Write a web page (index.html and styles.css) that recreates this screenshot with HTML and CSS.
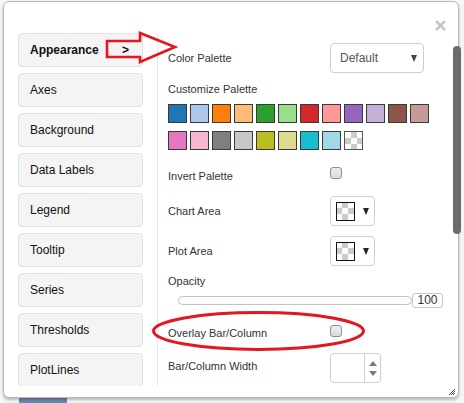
FILE: index.html
```html
<!DOCTYPE html>
<html>
<head>
<meta charset="utf-8">
<link rel="stylesheet" href="styles.css">
</head>
<body>
<div class="dialog">
  <div class="header">
    <svg class="close" width="11" height="11" viewBox="0 0 11 11"><path d="M1 1L10 10M10 1L1 10" stroke="#c6c6c6" stroke-width="2.6" fill="none"/></svg>
  </div>
  <div class="body">
    <nav class="tabs">
      <div class="tab active"><span>Appearance</span><span class="chev">&gt;</span></div>
      <div class="tab">Axes</div>
      <div class="tab">Background</div>
      <div class="tab">Data Labels</div>
      <div class="tab">Legend</div>
      <div class="tab">Tooltip</div>
      <div class="tab">Series</div>
      <div class="tab">Thresholds</div>
      <div class="tab">PlotLines</div>
    </nav>
    <div class="panel">
      <div class="row r-palette">
        <div class="lbl">Color Palette</div>
        <div class="select"><span>Default</span><span class="caret"></span></div>
      </div>
      <div class="sublbl">Customize Palette</div>
      <div class="swatches">
        <div class="sw" style="background:#1f77b4"></div>
        <div class="sw" style="background:#aec7e8"></div>
        <div class="sw" style="background:#ff7f0e"></div>
        <div class="sw" style="background:#ffbb78"></div>
        <div class="sw" style="background:#2ca02c"></div>
        <div class="sw" style="background:#98df8a"></div>
        <div class="sw" style="background:#d62728"></div>
        <div class="sw" style="background:#ff9896"></div>
        <div class="sw" style="background:#9467bd"></div>
        <div class="sw" style="background:#c5b0d5"></div>
        <div class="sw" style="background:#8c564b"></div>
        <div class="sw" style="background:#c49c94"></div>
        <div class="sw" style="background:#e377c2"></div>
        <div class="sw" style="background:#f7b6d2"></div>
        <div class="sw" style="background:#7f7f7f"></div>
        <div class="sw" style="background:#c7c7c7"></div>
        <div class="sw" style="background:#bcbd22"></div>
        <div class="sw" style="background:#dbdb8d"></div>
        <div class="sw" style="background:#17becf"></div>
        <div class="sw" style="background:#9edae5"></div>
        <div class="sw checker"></div>
      </div>
      <div class="row r-invert">
        <div class="lbl">Invert Palette</div>
        <div class="cb cb-up"></div>
      </div>
      <div class="row r-chart">
        <div class="lbl">Chart Area</div>
        <div class="colorbtn"><div class="chk"></div><span class="caret dark"></span></div>
      </div>
      <div class="row r-plot">
        <div class="lbl">Plot Area</div>
        <div class="colorbtn"><div class="chk"></div><span class="caret dark"></span></div>
      </div>
      <div class="sublbl op">Opacity</div>
      <div class="slider-row">
        <div class="track"></div>
        <div class="val">100</div>
      </div>
      <div class="row r-overlay">
        <div class="lbl">Overlay Bar/Column</div>
        <div class="cb"></div>
      </div>
      <div class="row r-width">
        <div class="lbl">Bar/Column Width</div>
        <div class="spin">
          <div class="spin-field"></div>
          <div class="spin-btns"><span class="up"></span><span class="down"></span></div>
        </div>
      </div>
    </div>
    <div class="scrollbar"><div class="thumb"></div></div>
  </div>
  <div class="footer">
    <svg width="8" height="8" viewBox="0 0 8 8"><path d="M7 1L1 7M7 3L3 7M7 5L5 7" stroke="#555" stroke-width="1" fill="none"/></svg>
  </div>
  <svg class="annot" width="464" height="403" viewBox="0 0 464 403">
    <polygon points="107,41 140,41 140,33 175,47 140,62 140,57 107,57" fill="none" stroke="#e4161f" stroke-width="2.6" stroke-linejoin="miter"/>
    <ellipse cx="258.5" cy="331" rx="105" ry="18.5" fill="none" stroke="#e4161f" stroke-width="3"/>
  </svg>
</div>
<div class="below"><div class="blue"></div></div>
</body>
</html>
```

FILE: styles.css
```css
html, body {
  margin: 0;
  padding: 0;
}
body {
  background: #f6f6f6;
  font-family: "Liberation Sans", Arial, sans-serif;
  color: #222;
  width: 464px;
  height: 403px;
  overflow: hidden;
}
.dialog {
  position: relative;
  box-sizing: border-box;
  width: 456px;
  height: 397px;
  margin: 1px 0 0 3px;
  background: #fff;
  border: 1px solid #b9b9b9;
  border-radius: 6px;
  box-shadow: 0 2px 3px rgba(0,0,0,0.25);
  display: flex;
  flex-direction: column;
}
.header {
  height: 31px;
  display: flex;
  justify-content: flex-end;
  align-items: flex-end;
  padding: 0 12px 2px 0;
  box-sizing: border-box;
}
.body {
  height: 353px;
  display: flex;
}
.tabs {
  width: 125px;
  margin: 0 14px 0 14px;
  height: 353px;
  overflow: hidden;
  display: flex;
  flex-direction: column;
  gap: 6px;
}
.tab {
  flex: 0 0 auto;
  box-sizing: border-box;
  height: 34px;
  background: #f4f4f4;
  border: 1px solid #e2e2e2;
  border-radius: 4px;
  padding: 0 13px 0 11px;
  font-size: 12px;
  line-height: 32px;
  color: #111;
  display: flex;
  justify-content: space-between;
}
.tab.active {
  font-weight: bold;
}
.chev {
  font-weight: bold;
  font-size: 12px;
}
.panel {
  flex: 1;
  border-left: 1px solid #e6e6e6;
  padding: 10px 0 0 10px;
  height: 353px;
  box-sizing: border-box;
  overflow: hidden;
  font-size: 11px;
  color: #333;
}
.row {
  display: flex;
  align-items: center;
}
.lbl {
  width: 162px;
  flex: 0 0 162px;
}
.r-palette { height: 30px; }
.select {
  box-sizing: border-box;
  width: 94px;
  height: 30px;
  border: 1px solid #cfcfcf;
  border-radius: 4px;
  display: flex;
  align-items: center;
  justify-content: space-between;
  padding: 0 6px 0 9px;
  font-size: 12px;
  color: #555;
}
.caret {
  width: 0;
  height: 0;
  border-left: 3.5px solid transparent;
  border-right: 3.5px solid transparent;
  border-top: 7px solid #444;
}
.caret.dark { border-top-color: #222; }
.sublbl {
  margin-top: 8px;
  line-height: 16px;
}
.swatches {
  margin-top: 7px;
  display: grid;
  grid-template-columns: repeat(12, 19px);
  grid-auto-rows: 19px;
  column-gap: 3px;
  row-gap: 8px;
}
.sw {
  box-sizing: border-box;
  border: 1px solid #3a3a3a;
}
.checker, .chk {
  background: repeating-conic-gradient(#cccccc 0 25%, #ffffff 0 50%) 0 0 / 12px 12px;
}
.checker { border-color: #555; }
.r-invert { margin-top: 14px; height: 24px; }
.cb {
  box-sizing: border-box;
  width: 12px;
  height: 12px;
  border: 1px solid #8e8e8e;
  border-radius: 3px;
  background: linear-gradient(#eeeeee, #dcdcdc);
}
.cb-up { margin-bottom: 6px; }
.r-chart { margin-top: 8px; height: 30px; }
.r-plot { margin-top: 10px; height: 30px; }
.colorbtn {
  box-sizing: border-box;
  width: 45px;
  height: 30px;
  border: 1px solid #cfcfcf;
  border-radius: 4px;
  display: flex;
  align-items: center;
  padding-left: 5px;
  gap: 8px;
}
.chk {
  box-sizing: border-box;
  width: 19px;
  height: 19px;
  border: 1px solid #111;
  background-position: -1px -1px;
}
.op { margin-top: 7px; }
.slider-row {
  margin-top: 3px;
  height: 16px;
  display: flex;
  align-items: center;
  padding-left: 10px;
  margin-right: 10px;
}
.track {
  flex: 1;
  height: 9px;
  box-sizing: border-box;
  border: 1px solid #c3c3c3;
  border-radius: 5px;
  background: #fbfbfb;
}
.val {
  box-sizing: border-box;
  width: 31px;
  height: 15px;
  border: 1px solid #c8c8c8;
  border-radius: 3px;
  font-size: 12px;
  line-height: 13px;
  text-align: center;
  color: #333;
}
.r-overlay { margin-top: 13px; height: 24px; }
.r-overlay .cb { margin-bottom: 4px; }
.r-width { margin-top: 8px; height: 30px; }
.r-width .lbl { margin-top: -4px; }
.spin {
  box-sizing: border-box;
  width: 51px;
  height: 30px;
  border: 1px solid #cfcfcf;
  border-radius: 4px;
  display: flex;
}
.spin-field {
  width: 33px;
  border-right: 1px solid #cfcfcf;
}
.spin-btns {
  flex: 1;
  display: flex;
  flex-direction: column;
  align-items: center;
  justify-content: space-around;
  padding: 4px 0;
}
.up, .down {
  width: 0;
  height: 0;
  border-left: 4px solid transparent;
  border-right: 4px solid transparent;
}
.up { border-bottom: 5px solid #7a7a7a; }
.down { border-top: 5px solid #7a7a7a; }
.scrollbar {
  width: 8px;
  margin-right: -3px;
  padding-top: 13px;
  box-sizing: border-box;
}
.thumb {
  height: 188px;
  background: #6c6c6c;
  border-radius: 4px;
}
.footer {
  flex: 1;
  display: flex;
  justify-content: flex-end;
  align-items: center;
  padding-right: 2px;
}
.annot {
  position: absolute;
  left: -4px;
  top: -2px;
  pointer-events: none;
}
.below {
  height: 5px;
  padding-left: 19px;
}
.blue {
  width: 48px;
  height: 5px;
  background: #7388a8;
}
```
